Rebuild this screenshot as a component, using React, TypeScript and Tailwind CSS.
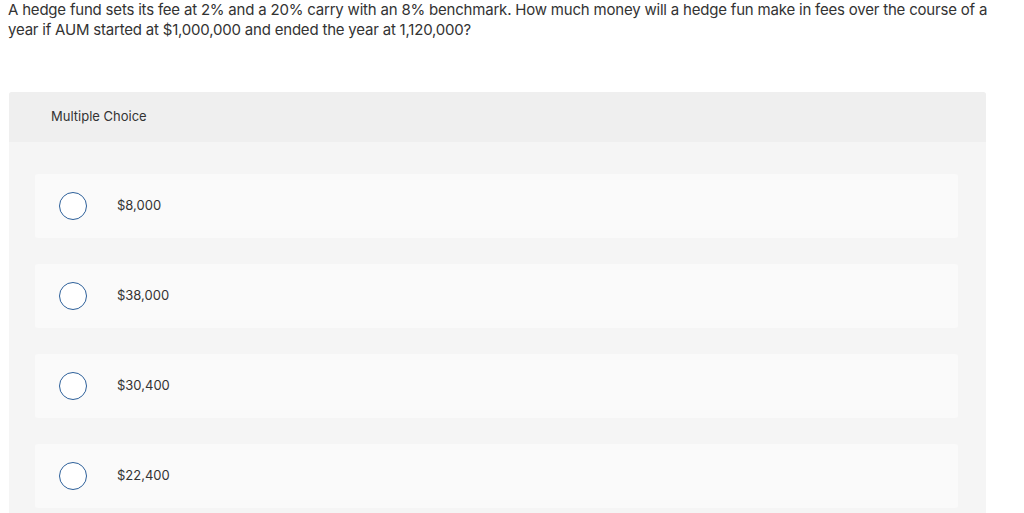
const options = ["$8,000", "$38,000", "$30,400", "$22,400"];

function Option({ label }: { label: string }) {
  return (
    <div className="flex h-[64px] items-center rounded-[3px] bg-[#fafafa] pl-[24px]">
      <span className="h-[28px] w-[28px] rounded-full border-[1.5px] border-[#2c5f99] bg-white" />
      <span className="ml-[30px] text-[13px] text-[#333]">{label}</span>
    </div>
  );
}

export default function App() {
  return (
    <div
      className="min-h-[513px] bg-white text-[#333]"
      style={{ fontFamily: "Inter, 'Open Sans', sans-serif" }}
    >
      <p className="px-[8px] text-[15px] leading-[20px] tracking-[-0.2px]">
        A hedge fund sets its fee at 2% and a 20% carry with an 8% benchmark. How much money will a
        hedge fun make in fees over the course of a<br />
        year if AUM started at $1,000,000 and ended the year at 1,120,000?
      </p>
      <div className="ml-[9px] mr-[38px] mt-[52px] rounded-t-[3px] bg-[#f5f5f5]">
        <div className="flex h-[50px] items-center rounded-t-[3px] bg-[#efefef] pl-[42px] text-[13px]">
          Multiple Choice
        </div>
        <div className="flex flex-col gap-[26px] pl-[26px] pr-[28px] pt-[32px] pb-[8px]">
          {options.map((o) => (
            <Option key={o} label={o} />
          ))}
        </div>
      </div>
    </div>
  );
}
